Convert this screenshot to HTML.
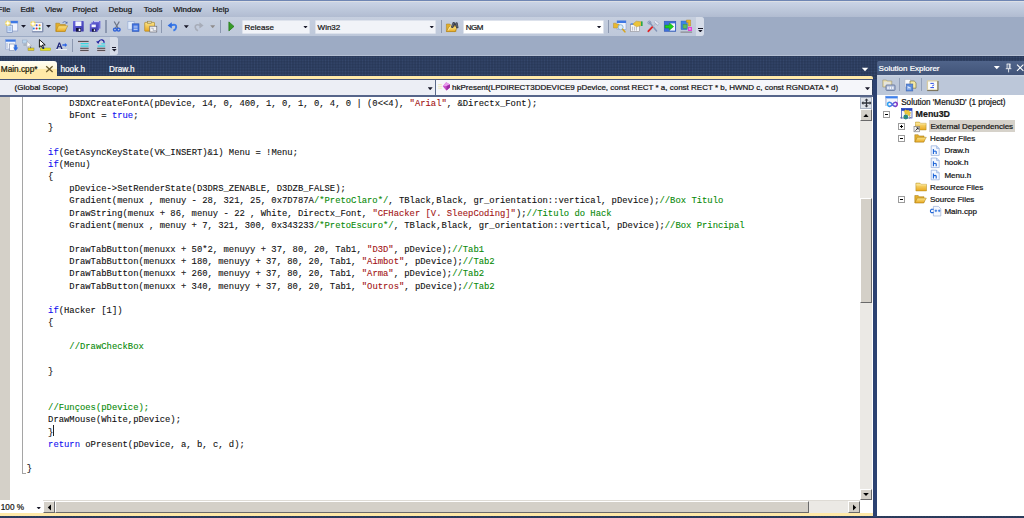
<!DOCTYPE html>
<html>
<head>
<meta charset="utf-8">
<title>Menu3D - Microsoft Visual Studio</title>
<style>
*{box-sizing:border-box;margin:0;padding:0}
html,body{width:1024px;height:518px;overflow:hidden;background:#2d3d5e;}
body{position:relative;font-family:"Liberation Sans",sans-serif;font-size:8px;line-height:10px;color:#151515;}
.abs,.t,.tb,.sep,.combo,.arr,svg{position:absolute}
.t{white-space:nowrap;font-size:8px;line-height:10px;-webkit-text-stroke:0.22px}
#topline{left:0;top:0;width:1024px;height:1.1px;background:#6f86b4}
#menubar{left:0;top:1.1px;width:1024px;height:15.8px;background:linear-gradient(#dddfe4,#dcdfe5 5%,#c9d3e5 9%,#b1bcd1)}
#shelf{left:0;top:16.9px;width:1024px;height:38.1px;background:#9dabc4}
#shelfline{left:0;top:55px;width:1024px;height:1px;background:#b4bfd3}
.tb{background:linear-gradient(#c6cfdf,#bec8da);border-radius:0 3px 3px 0}
.ovf{position:absolute;background:#d6dce8;border-radius:0 3px 3px 0}
.sep{width:1.4px;background:#8c98b0}
.combo{background:#f1f3f8;border:1px solid #dde2ec;border-radius:1px}
.arr{width:5px;height:2.9px;background:#1a1a2a;clip-path:polygon(0 0,100% 0,50% 100%)}
#dock{left:0;top:56px;width:1024px;height:462px;background-color:#293959;background-image:radial-gradient(circle at 50% 50%,rgba(70,92,135,0.5) 0.5px,rgba(70,92,135,0) 1.2px);background-size:2.85px 2.85px}
#tab1{left:-2px;top:61px;width:59px;height:16px;background:linear-gradient(#fffef6,#fff6d6 49%,#ffe9a8 51%,#ffe9a8);border-radius:0 3px 0 0}
#yline{left:0;top:76px;width:873px;height:3px;background:#ffe9a8;border-radius:0 2px 0 0}
#navtop{left:0;top:79px;width:873px;height:1px;background:#46557a}
#nav{left:0;top:80px;width:872px;height:15px;background:#eceef5}
#nav2{left:436px;top:80px;width:436px;height:15px;background:#f5f6fa}
#navsep{left:434.6px;top:80px;width:1.6px;height:15px;background:#5b6a8a}
#navbot{left:0;top:95px;width:873px;height:2px;background:#56658a}
#code{left:0;top:97px;width:872.8px;height:416px;background:#fff}
#gutter{left:0;top:97px;width:10px;height:403px;background:#d4d0c8}
#outline{left:22px;top:97px;width:1px;height:376px;background:#a5a5a5}
#outhook{left:22px;top:473px;width:4px;height:1px;background:#a5a5a5}
#caret{left:53px;top:425px;width:1px;height:11px;background:#222}
pre{position:absolute;left:26.8px;top:98px;font-family:"Liberation Mono",monospace;font-size:8.875px;line-height:12.17px;color:#101010;white-space:pre;-webkit-text-stroke:0.1px}
.k{color:#1010f0}.s{color:#a31515}.c{color:#088a08}
/* classic scrollbars */
.track{position:absolute;background:#ebe9e5}
.btn3d{position:absolute;background:#d4d0c8;border-top:1px solid #fff;border-left:1px solid #fff;border-right:1px solid #6a6a6a;border-bottom:1px solid #6a6a6a}
/* solution explorer */
#setitle{left:877px;top:61px;width:147px;height:14px;background:linear-gradient(#50648a,#415479);border-radius:2px 0 0 0}
#setb{left:877px;top:75px;width:147px;height:20px;background:linear-gradient(#cbd4e3,#bcc7d9 12%,#bcc7d9)}
#setree{left:877.2px;top:94.6px;width:147px;height:421.6px;background:#fff}
#gapl{left:872.8px;top:79px;width:4.4px;height:439px;background:#2c4272}
.exp{position:absolute;width:6.9px;height:6.9px;border:0.9px solid #9c9c9c;background:#fff}
.exp i{position:absolute;left:0.9px;top:2.1px;width:3.3px;height:0.9px;background:#000}
.exp b{position:absolute;left:2.1px;top:0.9px;width:0.9px;height:3.3px;background:#000}
#botline{left:0;top:516.5px;width:1024px;height:2px;background:#2a3a5c}
</style>
</head>
<body>
<div class="abs" id="topline"></div>
<div class="abs" id="menubar"></div>
<div class="t" style="left:-2.5px;top:4.6px">File</div>
<div class="t" style="left:20.4px;top:4.6px">Edit</div>
<div class="t" style="left:45px;top:4.6px">View</div>
<div class="t" style="left:72.6px;top:4.6px">Project</div>
<div class="t" style="left:108.6px;top:4.6px">Debug</div>
<div class="t" style="left:143.8px;top:4.6px">Tools</div>
<div class="t" style="left:173.2px;top:4.6px">Window</div>
<div class="t" style="left:212.5px;top:4.6px">Help</div>
<div class="abs" id="shelf"></div>
<div class="abs" id="shelfline"></div>
<!-- toolbar row 1 -->
<div class="tb" style="left:0;top:17.4px;width:704px;height:18.4px"></div>
<div class="ovf" style="left:695.5px;top:17.4px;width:8.5px;height:18.4px"></div>
<div class="abs" style="left:698px;top:27.6px;width:4.6px;height:1.1px;background:#1a1a2a"></div>
<div class="arr" style="left:697.9px;top:29.7px;width:4.8px;height:2.7px"></div>
<!-- toolbar row 2 -->
<div class="tb" style="left:0;top:36.8px;width:118px;height:18.4px"></div>
<div class="ovf" style="left:109.8px;top:36.8px;width:8.2px;height:18.4px"></div>
<div class="abs" style="left:111.8px;top:46.8px;width:4.6px;height:1.1px;background:#1a1a2a"></div>
<div class="arr" style="left:111.9px;top:48.9px;width:4.8px;height:2.7px"></div>
<!-- separators row1 -->
<div class="sep" style="left:105.4px;top:20px;height:13px"></div>
<div class="sep" style="left:161px;top:20px;height:13px"></div>
<div class="sep" style="left:219.6px;top:20px;height:13px"></div>
<div class="sep" style="left:440.8px;top:20px;height:13px"></div>
<div class="sep" style="left:608px;top:20px;height:13px"></div>
<div class="sep" style="left:72px;top:39px;height:13px"></div>
<!-- dropdown arrows for toolbar buttons -->
<div class="arr" style="left:21px;top:24.9px"></div>
<div class="arr" style="left:46px;top:24.9px"></div>
<div class="arr" style="left:183.8px;top:25.3px"></div>
<div class="arr" style="left:210.2px;top:25.3px;background:#8f8c8c"></div>
<!-- combos -->
<div class="combo" style="left:242px;top:19.5px;width:68px;height:14px"></div>
<div class="t" style="left:244.6px;top:22.9px">Release</div>
<div class="arr" style="left:303px;top:25.6px"></div>
<div class="combo" style="left:315px;top:19.5px;width:121px;height:14px"></div>
<div class="t" style="left:317.6px;top:22.9px">Win32</div>
<div class="arr" style="left:429.25px;top:25.6px"></div>
<div class="combo" style="left:463px;top:19.5px;width:140.5px;height:14px;background:#fff"></div>
<div class="t" style="left:465.8px;top:23.1px;letter-spacing:-0.5px">NGM</div>
<div class="arr" style="left:596.6px;top:25.6px"></div>
<!-- toolbar icons overlay -->
<svg style="left:0;top:0" width="1024" height="56" viewBox="0 0 1024 56">
<defs>
<linearGradient id="gold" x1="0" y1="0" x2="0" y2="1"><stop offset="0" stop-color="#fbe58a"/><stop offset="1" stop-color="#e9a820"/></linearGradient>
<linearGradient id="flop" x1="0" y1="0" x2="1" y2="1"><stop offset="0" stop-color="#6a68e0"/><stop offset="1" stop-color="#3836a8"/></linearGradient>
<radialGradient id="spark"><stop offset="0" stop-color="#fffbe0"/><stop offset="0.45" stop-color="#f8d850"/><stop offset="1" stop-color="#f0c030" stop-opacity="0.75"/></radialGradient>
</defs>
<!-- 1 new project -->
<rect x="10.8" y="21" width="7" height="10" fill="#f1f4fc" stroke="#7f95c8" stroke-width="0.6"/>
<rect x="10.8" y="21" width="7" height="2.3" fill="#3d78e4"/>
<rect x="7" y="25.2" width="5.6" height="7.2" fill="#cfe0f8" stroke="#6c82b4" stroke-width="0.6"/>
<rect x="8.4" y="26.8" width="2.8" height="4.2" fill="#a9c6f2"/>
<circle cx="7.8" cy="23.2" r="2.7" fill="#f6d858" opacity="0.85"/><path d="M7.8 20.0l0.9 2.3 2.3 0.9-2.3 0.9-0.9 2.3-0.9-2.3-2.3-0.9 2.3-0.9z" fill="#fff8d0"/><circle cx="7.8" cy="23.2" r="1" fill="#fff"/>
<!-- 2 new item -->
<rect x="32.2" y="22.6" width="10.4" height="9" fill="#f4f6fc" stroke="#8a98bc" stroke-width="0.6"/>
<path d="M32.2 31.9h10.7v-9" fill="none" stroke="#5c6a92" stroke-width="0.7"/>
<circle cx="36.6" cy="25.2" r="1" fill="#4a4fd4"/><circle cx="39.6" cy="25.2" r="1" fill="#f0901c"/>
<circle cx="33.8" cy="28.4" r="1" fill="#2585e8"/><circle cx="36.6" cy="28.4" r="1" fill="#e82424"/><circle cx="39.6" cy="28.4" r="1" fill="#22a022"/>
<circle cx="33" cy="23.8" r="2.7" fill="#f6d858" opacity="0.85"/><path d="M33 20.6l0.9 2.3 2.3 0.9-2.3 0.9-0.9 2.3-0.9-2.3-2.3-0.9 2.3-0.9z" fill="#fff8d0"/><circle cx="33" cy="23.8" r="1" fill="#fff"/>
<!-- 3 open -->
<path d="M55.8 23.2h3.6l1 1.3h5v6.8h-9.6z" fill="#e2ae2c" stroke="#a87c14" stroke-width="0.5"/>
<path d="M55.9 31.4l2.6-5.6h9.2l-2.7 5.6z" fill="url(#gold)" stroke="#a87c14" stroke-width="0.5"/>
<path d="M62.6 22.6q2-1.9 4.1-0.2" fill="none" stroke="#4a68a8" stroke-width="0.8"/><path d="M67.4 21.4v2.2h-2.2z" fill="#3a58a0"/>
<!-- 4 save -->
<rect x="73" y="21.1" width="10.7" height="10.5" rx="0.6" fill="url(#flop)"/>
<rect x="75.4" y="21.4" width="6" height="4.6" fill="#f4f6ff"/>
<rect x="76" y="28" width="5" height="3.6" fill="#15153a"/><rect x="78.7" y="28.7" width="1.7" height="2.3" fill="#f0f0ff"/>
<!-- 5 save all -->
<rect x="93" y="21" width="7.4" height="7.6" fill="#6f6dd8"/>
<rect x="91.4" y="22.4" width="7.6" height="7.8" fill="#5a58cc"/>
<rect x="89.8" y="23.8" width="7.8" height="7.9" fill="url(#flop)"/>
<rect x="91.6" y="24.6" width="4.2" height="2.6" fill="#f4f6ff"/><rect x="92" y="28.8" width="3.6" height="2.9" fill="#15153a"/><rect x="93.8" y="29.3" width="1.3" height="1.9" fill="#e8e8f8"/>
<path d="M94 21.6h5" stroke="#e8e8ff" stroke-width="0.8"/>
<!-- 6 cut -->
<path d="M114.2 21.5l4 7M119.3 21.5l-4 7" stroke="#6b7385" stroke-width="1.2" fill="none"/>
<circle cx="115" cy="29.6" r="1.5" fill="none" stroke="#2f62d8" stroke-width="1.4"/><circle cx="118.6" cy="29.6" r="1.5" fill="none" stroke="#2f62d8" stroke-width="1.4"/>
<!-- 7 copy -->
<rect x="127.9" y="21.6" width="6.2" height="7.6" fill="#dfeafb" stroke="#92a8d4" stroke-width="0.6"/>
<rect x="132.2" y="23.8" width="6.8" height="7.6" fill="#3f72e0" stroke="#2c54b4" stroke-width="0.6"/>
<path d="M133.6 26.2h4M133.6 27.9h4M133.6 29.6h4" stroke="#dfe9fb" stroke-width="0.8"/>
<!-- 8 paste -->
<rect x="144.7" y="22.4" width="9.8" height="8.8" rx="0.5" fill="url(#gold)" stroke="#a87c14" stroke-width="0.6"/>
<rect x="147.6" y="21.2" width="4" height="2.1" fill="#d8d2b0" stroke="#8c7a3c" stroke-width="0.5"/>
<rect x="149.8" y="26.2" width="7" height="5.8" fill="#f1f1f4" stroke="#5c5c64" stroke-width="0.6"/>
<path d="M151.2 28.2h2v2.4h3" stroke="#9aa0b0" stroke-width="0.7" fill="none"/>
<!-- 9 undo -->
<path d="M171 25.3q5.4-1.6 5.2 1.8-0.2 2.4-2.8 3.6" fill="none" stroke="#3b7ae8" stroke-width="1.9"/>
<path d="M167.6 25.6l4.2-3.4v6.4z" fill="#2f6ce0"/>
<!-- 10 redo -->
<path d="M200.4 25.3q-5.4-1.6-5.2 1.8 0.2 2.4 2.8 3.6" fill="none" stroke="#a7acb8" stroke-width="1.6"/>
<path d="M203.6 25.6l-4.2-3.4v6.4z" fill="#a7acb8"/>
<!-- 11 start -->
<path d="M228.9 21.9l5.1 4.5-5.1 4.5z" fill="#379c26" stroke="#1f7214" stroke-width="0.7"/>
<!-- 12 find in files -->
<path d="M446.4 24h3.4l1 1.2h5.2v6.3h-9.6z" fill="#e2ae2c" stroke="#a87c14" stroke-width="0.5"/>
<path d="M446.5 31.6l2.4-5h8.6l-2.5 5z" fill="url(#gold)" stroke="#a87c14" stroke-width="0.5"/>
<path d="M450.9 27.3l1.7-4.7q0.3-0.8 1.2-0.6l0.9 0.3 0.4 1.5 0.6-1.4 1-0.2q0.8 0 1 0.8l0.8 4.7q-1 0.9-2.3 0.3l-0.6-2.6h-1.3l-1.1 2.4q-1.3 0.5-2.3-0.5z" fill="#3c404c"/><path d="M452.2 26.8l1.2-3.6M456.6 23.4l0.6 3.8" stroke="#9ca0b0" stroke-width="0.5" fill="none"/>
<path d="M448 30.5l3.2-5.2" stroke="#fff6c8" stroke-width="0.6"/>
<!-- 13 -->
<rect x="617" y="20.7" width="9" height="8.6" fill="#eef3fc" stroke="#86a0d4" stroke-width="0.6"/>
<rect x="617" y="20.7" width="9" height="2.3" fill="#3d78e4"/>
<path d="M613.5 23.2h2.4l0.7 0.8h2.6v4h-5.7z" fill="#e8b830" stroke="#b08418" stroke-width="0.4"/>
<circle cx="620.6" cy="27.2" r="2.5" fill="#dceefb" stroke="#84b0d8" stroke-width="0.9"/>
<path d="M622.6 29.3l2.3 2.5" stroke="#d6a420" stroke-width="1.6" stroke-linecap="round"/>
<!-- 14 properties -->
<rect x="630.6" y="24.4" width="9" height="7.2" fill="#f7f7f9" stroke="#8c8c94" stroke-width="0.6"/>
<rect x="630.6" y="23.2" width="3" height="1.6" fill="#5a8ce4"/>
<path d="M632.4 26.6v4M634.4 26.6v4M636.4 26.6v4" stroke="#b9bcc6" stroke-width="1"/>
<path d="M632.8 24.2l3.4-3 5 0.6v3.8l-4.6 1.2z" fill="#ecc43a" stroke="#b48c1c" stroke-width="0.4"/>
<rect x="641" y="21.4" width="1.6" height="4.6" fill="#28a848"/>
<!-- 15 tools -->
<path d="M649.6 22.6l7 8.4" stroke="#8496b8" stroke-width="1.5" stroke-linecap="round"/>
<circle cx="649.4" cy="22.6" r="1.5" fill="none" stroke="#8496b8" stroke-width="1"/>
<path d="M652.4 27l4.4-4.6" stroke="#b4bccc" stroke-width="1.2"/>
<path d="M654.6 21.2l4 3.4" stroke="#98a4bc" stroke-width="2.8"/><path d="M654.8 21.3l3.6 3.1" stroke="#e4e8f2" stroke-width="1.8"/>
<path d="M648.4 31.2l3.8-4" stroke="#e02424" stroke-width="1.9" stroke-linecap="round"/>
<!-- 16 -->
<rect x="664.2" y="21.2" width="11.6" height="10.2" fill="#3d6edc" stroke="#2a4ea8" stroke-width="0.5"/>
<rect x="669.6" y="23.4" width="5.4" height="7.2" fill="#f1f5fd"/>
<path d="M665 25.2h4.4v-2.2l4.2 3.6-4.2 3.6v-2.2h-4.4z" fill="#1cd41c" stroke="#0c8c0c" stroke-width="0.5"/>
<!-- 17 -->
<rect x="681" y="21" width="6.2" height="8.6" fill="#3c84e4" stroke="#2a5cb0" stroke-width="0.4"/>
<rect x="683" y="24.4" width="4" height="3.8" fill="#5cbc5c" stroke="#3c8c3c" stroke-width="0.4"/>
<path d="M686.4 20h4.2v6h-2.2v-3.6h-2z" fill="#ecb424" stroke="#a87c14" stroke-width="0.4"/>
<rect x="688" y="27" width="4" height="4" fill="#e444d4"/><rect x="689.2" y="28.2" width="1.4" height="1.4" fill="#fbd0f6"/>
<path d="M680.5 32.1h11.6" stroke="#7c7c80" stroke-width="1"/>
<!-- row 2 : 1 -->
<rect x="5.6" y="39.6" width="10" height="9.4" fill="#eef3fc" stroke="#90a6d8" stroke-width="0.6"/>
<rect x="5.6" y="39.6" width="10" height="2.1" fill="#3d78e4"/>
<path d="M7 43v5" stroke="#c4ccdc" stroke-width="1.6"/>
<rect x="9.6" y="44" width="4.6" height="6.6" fill="#fff" stroke="#7484a8" stroke-width="0.6"/>
<path d="M14.6 44.8h2.2v2.8h1.4l-2.5 3.3-2.5-3.3h1.4z" fill="#2e6ee4"/>
<!-- 2 -->
<rect x="22.6" y="40" width="4.4" height="3" fill="#bcd8f0" stroke="#8ca4c4" stroke-width="0.5"/>
<rect x="23.4" y="43.4" width="3" height="2.6" fill="#a8b4c4"/>
<path d="M27 41.4l4.6 4.2-2.2 0.2 1 1.8-1 0.4-1-1.8-1.4 1.2z" fill="#fff" stroke="#9c9ca4" stroke-width="0.5"/>
<rect x="28" y="48" width="6" height="2.6" fill="#e8d428" stroke="#8c8440" stroke-width="0.5"/>
<path d="M30.6 46.6v1.6" stroke="#50586c" stroke-width="0.8"/>
<!-- 3 -->
<path d="M39.4 39.6l5.8 5.3-2.9 0.2 1.3 2.4-1.2 0.5-1.2-2.4-1.8 1.6z" fill="#fff" stroke="#000" stroke-width="0.9"/>
<rect x="40.6" y="48" width="10" height="2.6" fill="#e4e424" stroke="#a4a428" stroke-width="0.5"/>
<rect x="42.4" y="47.4" width="1.8" height="1.6" fill="#102484"/>
<!-- 4 A-> -->
<path d="M56 49.6h11" stroke="#f4f6fb" stroke-width="0.9"/>
<path d="M56.2 49l2.6-6.6h1.2l2.6 6.6h-1.5l-0.6-1.7h-2.3l-0.6 1.7zM58.7 46.2h1.6l-0.8-2.3z" fill="#1c2478"/>
<path d="M62.4 44.3h2.5v-1.4l2.4 2.1-2.4 2.1v-1.4h-2.5z" fill="#2e64e4"/>
<!-- 6 comment -->
<path d="M78 41.4h10.6M80.2 48.3h8.4M80.2 50.4h8.4" stroke="#1c1c20" stroke-width="0.9"/>
<path d="M80.6 43.6h8M80.6 46.1h8" stroke="#38d8e0" stroke-width="1.3"/>
<path d="M78 42.1h10.6M80.2 49h8.4M80.2 51.1h8.4" stroke="#e8b4a8" stroke-width="0.4"/>
<!-- 7 uncomment -->
<path d="M98.4 42.2q1-2.8 3.6-2.4 2.4 0.6 2 3" fill="none" stroke="#2424a0" stroke-width="1.2"/>
<path d="M96 41.6l3.4-0.6-1 3z" fill="#2424a0"/>
<path d="M97.6 46.1h7.6" stroke="#38d8e0" stroke-width="1.3"/><path d="M101.4 43.8h3.8" stroke="#38d8e0" stroke-width="1.1"/>
<path d="M97.2 48.3h8M97.2 50.4h8" stroke="#1c1c20" stroke-width="0.9"/>
<path d="M97.2 49h8M97.2 51.1h8" stroke="#e8b4a8" stroke-width="0.4"/>
</svg>
<div class="abs" id="dock"></div>
<!-- tabs -->
<div class="abs" id="tab1"></div>
<div class="t" style="left:0.8px;top:64.9px;font-size:8.25px;color:#1a1a10">Main.cpp*</div>
<svg style="left:45px;top:65px" width="9" height="8" viewBox="0 0 9 8"><path d="M1.2 1.2l6.4 5.8M7.6 1.2l-6.4 5.8" stroke="#6b5a2c" stroke-width="1.25" fill="none"/></svg>
<div class="t" style="left:60.4px;top:64.9px;font-size:8.25px;color:#fff">hook.h</div>
<div class="t" style="left:109px;top:64.9px;font-size:8.25px;color:#fff">Draw.h</div>
<svg style="left:861px;top:67px" width="8" height="5" viewBox="0 0 8 5"><path d="M0.8 0.8h6.4l-3.2 3.4z" fill="#fff"/></svg>
<div class="abs" id="yline"></div>
<div class="abs" id="navtop"></div>
<div class="abs" id="nav"></div>
<div class="abs" id="nav2"></div>
<div class="abs" id="navsep"></div>
<div class="abs" id="navbot"></div>
<div class="t" style="left:14.6px;top:83.2px">(Global Scope)</div>
<div class="arr" style="left:427.7px;top:87.3px"></div>
<svg style="left:437px;top:81px" width="15" height="11" viewBox="0 0 15 11"><path d="M1.2 3.6h3.6M1.2 5.4h3.6M1.2 7.2h3.6" stroke="#ece6b0" stroke-width="0.8"/><path d="M5.8 5.2l3.4-4 3.8 2.2v3.2l-3.6 3z" fill="#c84cc8"/><path d="M5.8 5.2l3.4-4 3.8 2.2-3.4 1.6z" fill="#e89cec"/><path d="M9.6 5l3.4-1.6v3.2l-3.6 3z" fill="#9c2ca4"/></svg>
<div class="t" style="left:452px;top:83.1px">hkPresent(LPDIRECT3DDEVICE9 pDevice, const RECT * a, const RECT * b, HWND c, const RGNDATA * d)</div>
<div class="arr" style="left:865px;top:87.3px"></div>
<!-- code -->
<div class="abs" id="code"></div>
<div class="abs" id="gutter"></div>
<div class="abs" id="outline"></div>
<div class="abs" id="outhook"></div>
<pre id="src">        D3DXCreateFontA(pDevice, 14, 0, 400, 1, 0, 1, 0, 4, 0 | (0&lt;&lt;4), <span class="s">"Arial"</span>, &amp;Directx_Font);
        bFont = <span class="k">true</span>;
    }

    <span class="k">if</span>(GetAsyncKeyState(VK_INSERT)&amp;1) Menu = !Menu;
    <span class="k">if</span>(Menu)
    {
        pDevice-&gt;SetRenderState(D3DRS_ZENABLE, D3DZB_FALSE);
        Gradient(menux , menuy - 28, 321, 25, 0x7D787A<span class="c">/*PretoClaro*/</span>, TBlack,Black, gr_orientation::vertical, pDevice);<span class="c">//Box Titulo</span>
        DrawString(menux + 86, menuy - 22 , White, Directx_Font, <span class="s">"CFHacker [V. SleepCoding]"</span>);<span class="c">//Titulo do Hack</span>
        Gradient(menux , menuy + 7, 321, 300, 0x343233<span class="c">/*PretoEscuro*/</span>, TBlack,Black, gr_orientation::vertical, pDevice);<span class="c">//Box Principal</span>

        DrawTabButton(menuxx + 50*2, menuyy + 37, 80, 20, Tab1, <span class="s">"D3D"</span>, pDevice);<span class="c">//Tab1</span>
        DrawTabButton(menuxx + 180, menuyy + 37, 80, 20, Tab1, <span class="s">"Aimbot"</span>, pDevice);<span class="c">//Tab2</span>
        DrawTabButton(menuxx + 260, menuyy + 37, 80, 20, Tab1, <span class="s">"Arma"</span>, pDevice);<span class="c">//Tab2</span>
        DrawTabButton(menuxx + 340, menuyy + 37, 80, 20, Tab1, <span class="s">"Outros"</span>, pDevice);<span class="c">//Tab2</span>

    <span class="k">if</span>(Hacker [1])
    {

        <span class="c">//DrawCheckBox</span>

    }


    <span class="c">//Funçoes(pDevice);</span>
    DrawMouse(White,pDevice);
    }
    <span class="k">return</span> oPresent(pDevice, a, b, c, d);

}</pre>
<div class="abs" id="caret"></div>
<!-- vertical scrollbar -->
<div class="track" style="left:860px;top:97px;width:12px;height:403px"></div>
<div class="abs" style="left:860px;top:97px;width:12px;height:12px;background:#dfe3ea;border:1px solid #a9b3c4"></div>
<svg style="left:860.5px;top:98px" width="11" height="10" viewBox="0 0 11 10"><path d="M5.5 0.6l2 2h-1.4v1.6h2.6v-1.1l1.8 1.9-1.8 1.9v-1.1h-2.6v1.6h1.4l-2 2-2-2h1.4v-1.6h-2.6v1.1l-1.8-1.9 1.8-1.9v1.1h2.6v-1.6h-1.4z" fill="#30343c"/></svg>
<div class="btn3d" style="left:860px;top:109.3px;width:12px;height:12px"></div>
<div class="arr" style="left:863.2px;top:114.1px;width:5.6px;height:3.1px;background:#000;clip-path:polygon(0 100%,100% 100%,50% 0)"></div>
<div class="btn3d" style="left:860px;top:197.5px;width:12px;height:105.5px"></div>
<div class="btn3d" style="left:860px;top:488.6px;width:12px;height:11.5px"></div>
<div class="arr" style="left:863.2px;top:492.9px;width:5.6px;height:3.1px;background:#000"></div>
<!-- horizontal scrollbar row -->
<div class="abs" style="left:0;top:500px;width:872.5px;height:13px;background:#fff"></div>
<div class="abs" style="left:43px;top:499.9px;width:816.5px;height:1px;background:#dedbd5"></div>
<div class="track" style="left:43px;top:500.5px;width:816.5px;height:12px"></div>
<div class="t" style="left:0.8px;top:502.6px;font-size:8.2px">100 %</div>
<div class="arr" style="left:36.25px;top:506.5px"></div>
<div class="btn3d" style="left:43px;top:500.5px;width:11.6px;height:12px"></div>
<svg style="left:47px;top:503.9px" width="5" height="7" viewBox="0 0 5 7"><path d="M4 0.5v6l-3.2-3z" fill="#000"/></svg>
<div class="btn3d" style="left:54.8px;top:500.5px;width:753.9px;height:12px"></div>
<div class="btn3d" style="left:847.8px;top:500.5px;width:11.9px;height:12px"></div>
<svg style="left:851.6px;top:503.9px" width="5" height="7" viewBox="0 0 5 7"><path d="M1 0.5v6l3.2-3z" fill="#000"/></svg>
<div class="abs" style="left:0;top:513.4px;width:872.6px;height:3.1px;background:#ffe9a8"></div>
<!-- gap -->
<div class="abs" id="gapl"></div>
<!-- solution explorer -->
<div class="abs" id="setitle"></div>
<div class="t" style="left:878.6px;top:64px;color:#fff">Solution Explorer</div>
<svg style="left:992px;top:62px" width="32" height="12" viewBox="0 0 32 12"><path d="M1.8 4h6l-3 3.2z" fill="#fff"/><path d="M14.7 2h3.8M15.1 2v4.6M18.1 2v4.6M17.3 2v4.6M13.8 6.7h5.6M16.6 6.7v3.7" stroke="#fff" stroke-width="0.8" fill="none"/><path d="M25 2.6l6.4 6.2M31.4 2.6l-6.4 6.2" stroke="#fff" stroke-width="1.1" fill="none"/></svg>
<div class="abs" id="setb"></div>
<div class="abs" id="setree"></div>
<div class="sep" style="left:898.8px;top:78.4px;height:13px;background:#93a0b8"></div>
<div class="sep" style="left:920.8px;top:78.4px;height:13px;background:#93a0b8"></div>
<div class="abs" style="left:929px;top:120.4px;width:86.4px;height:11.6px;background:#d6d2ca"></div>
<div class="t" style="left:901.2px;top:97.8px;font-size:8.15px">Solution 'Menu3D' (1 project)</div>
<div class="t" style="left:915.6px;top:108.9px;font-weight:bold;font-size:8.85px">Menu3D</div>
<div class="t" style="left:930.4px;top:121.9px">External Dependencies</div>
<div class="t" style="left:929.9px;top:134.1px">Header Files</div>
<div class="t" style="left:944.4px;top:146.2px">Draw.h</div>
<div class="t" style="left:944.4px;top:158.4px">hook.h</div>
<div class="t" style="left:944.4px;top:170.6px">Menu.h</div>
<div class="t" style="left:929.9px;top:182.7px">Resource Files</div>
<div class="t" style="left:929.9px;top:194.9px">Source Files</div>
<div class="t" style="left:944.4px;top:207.1px">Main.cpp</div>
<div class="exp" style="left:883.1px;top:111.2px"><i></i></div>
<div class="exp" style="left:897.8px;top:123.1px"><i></i><b></b></div>
<div class="exp" style="left:897.8px;top:135.2px"><i></i></div>
<div class="exp" style="left:897.8px;top:196px"><i></i></div>
<svg style="left:877px;top:75px" width="147" height="150" viewBox="877 75 147 150">
<defs>
<linearGradient id="gold2" x1="0" y1="0" x2="0" y2="1"><stop offset="0" stop-color="#fbe58a"/><stop offset="1" stop-color="#e9a820"/></linearGradient>
<linearGradient id="inf" x1="0" y1="0" x2="1" y2="0"><stop offset="0" stop-color="#28a8f4"/><stop offset="0.5" stop-color="#5068e0"/><stop offset="1" stop-color="#8a2cc0"/></linearGradient>
<g id="hfile"><path d="M0.4 0.4h5.4l2.6 2.6v7h-8z" fill="#f4f8ff" stroke="#7a9ad4" stroke-width="0.6"/><path d="M5.8 0.4v2.6h2.6" fill="#c8dcf8" stroke="#7a9ad4" stroke-width="0.5"/><path d="M2.6 3.6v5M2.6 6.4q1.6-1.4 2.8-0.2v2.4" fill="none" stroke="#1c64d8" stroke-width="1.1"/></g>
<g id="fopen"><path d="M0.2 1.2h3.4l1 1.2h4.8v6h-9.2z" fill="#e2ae2c" stroke="#a87c14" stroke-width="0.5"/><path d="M0.3 8.6l2.4-4.8h9l-2.6 4.8z" fill="url(#gold2)" stroke="#a87c14" stroke-width="0.5"/></g>
<g id="fclosed"><path d="M0.3 1h4l1 1.2h5.6v6.6h-10.6z" fill="url(#gold2)" stroke="#b08818" stroke-width="0.5"/><path d="M0.3 2.8h10.6" stroke="#fff2b8" stroke-width="0.6"/></g>
</defs>
<!-- toolbar icons -->
<path d="M882.8 80h3.6l0.8 1h4.6v6h-9z" fill="#eadfae" stroke="#989070" stroke-width="0.6"/>
<rect x="884" y="81.8" width="6.4" height="4" fill="#e4e4dc"/>
<rect x="886" y="85" width="9" height="5.4" rx="0.8" fill="#b4c2dc" stroke="#586a92" stroke-width="0.8"/>
<path d="M888 86.8v2.2M890.4 86.8v2.2M892.8 86.8v2.2" stroke="#f4f6fb" stroke-width="1.3"/>
<rect x="905" y="79.6" width="5.8" height="7.4" fill="#fafafa" stroke="#b4b8c4" stroke-width="0.5"/>
<path d="M910 81h4.2l1.8 1.8v5.4h-6z" fill="#f4e8a4" stroke="#6c6434" stroke-width="0.6"/>
<rect x="906.2" y="84" width="6.6" height="7" fill="#5c8cdc" stroke="#3c64b0" stroke-width="0.6"/>
<path d="M908 86v3.6M910 87v2.6M908 87.4h2" stroke="#e8f0fc" stroke-width="0.9"/>
<rect x="927.4" y="80.8" width="10.2" height="9.4" rx="0.6" fill="#fdfdf8" stroke="#d8cca4" stroke-width="1.3"/>
<path d="M927.2 90.6h10.8v-9.6" fill="none" stroke="#5c543c" stroke-width="0.8"/>
<path d="M930.4 83.4h3.4M934.2 84.8l-2 1.2M930.4 87.6h3.6" stroke="#2c4ce8" stroke-width="1" fill="none"/>
<!-- solution icon -->
<rect x="885.6" y="96.2" width="12" height="9.4" fill="#f4f6fc" stroke="#a4b4d8" stroke-width="0.6"/>
<rect x="885.6" y="96.2" width="12" height="2.2" fill="#3d80ec"/>
<path d="M886.2 99v6" stroke="#c4cce0" stroke-width="1.2"/>
<path d="M892.4 104.6q-1.4-2.6-3.2-2.4-1.8 0.4-1.6 2.4 0.4 2 2 1.8 1.6-0.2 2.8-1.8 1.6-2.6 3.2-2.4 1.8 0.4 1.6 2.4-0.4 2-2 1.8-1.6-0.2-2.8-1.8z" fill="none" stroke="url(#inf)" stroke-width="1.5"/>
<!-- project icon -->
<rect x="901.4" y="108.4" width="10.6" height="9.6" fill="#f8f8fc" stroke="#2c48b4" stroke-width="0.7"/>
<rect x="901.4" y="108.4" width="10.6" height="2.4" fill="#2040c0"/>
<path d="M904 111.4l1.4-1.8 1.6 1 1.6-0.6 0.6 1.6 1.6 0.8-0.8 2 0.4 1.4-2-0.2-1.4-1.6-2 0.4-0.2-1.8z" fill="#ecc83c" stroke="#b48c1c" stroke-width="0.3"/>
<circle cx="905.8" cy="117" r="2.4" fill="#2c9c54"/><path d="M904 116.4q1.8-1.6 3.6 0M904.2 118q1.6 1 3.2 0" stroke="#2c64d8" stroke-width="0.8" fill="none"/>
<path d="M901.6 117l-1.2 0.8 1.2 0.8M909.2 116.6l1.4 0.9-1.4 0.9" stroke="#505058" stroke-width="0.6" fill="none"/>
<!-- folders -->
<use href="#fclosed" x="915.2" y="121.1"/>
<rect x="914" y="126.6" width="5.6" height="5.2" fill="#f4f4f4" stroke="#6c6c74" stroke-width="0.6"/><path d="M915.4 130.6l2.8-2.8M916.4 127.8h1.8v1.8" stroke="#101010" stroke-width="0.8" fill="none"/>
<use href="#fopen" x="914.6" y="133.5"/>
<use href="#hfile" x="930.8" y="145.4"/>
<use href="#hfile" x="930.8" y="157.6"/>
<use href="#hfile" x="930.8" y="169.8"/>
<use href="#fclosed" x="915.6" y="182.1"/>
<use href="#fopen" x="914.6" y="194.3"/>
<!-- cpp icon -->
<path d="M933.4 206.4h5l2.4 2.4v7.2h-7.4z" fill="#f4f8ff" stroke="#8aa4d4" stroke-width="0.6"/>
<path d="M933.6 209.4q-2.6-0.8-3.2 1.4-0.2 2.4 3.2 1.6" fill="none" stroke="#1c64d8" stroke-width="1.1"/>
<path d="M934.6 210.8h2.6M935.9 209.5v2.6M938 210.8h2.4M939.2 209.5v2.6" stroke="#1c64d8" stroke-width="0.8"/>
</svg>
<div class="abs" id="botline"></div>
</body>
</html>
